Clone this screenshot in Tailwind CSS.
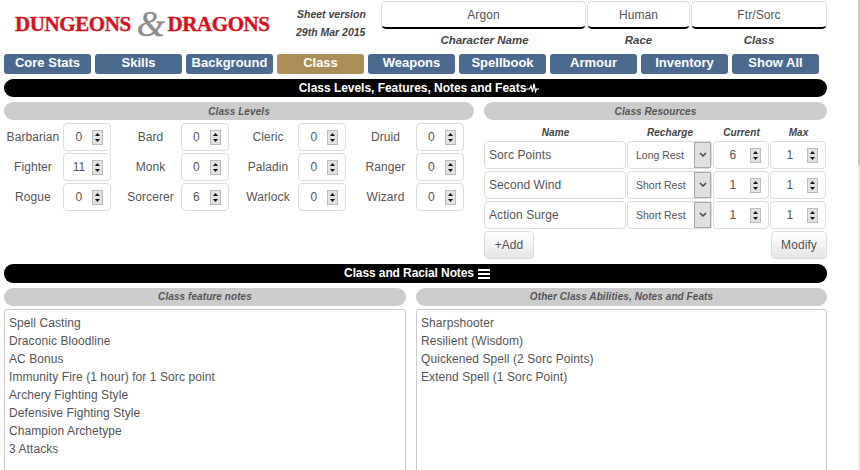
<!DOCTYPE html>
<html lang="en">
<head>
  <meta charset="UTF-8" />
  <title>Character Sheet</title>
  <script src="https://cdn.jsdelivr.net/npm/@tailwindcss/browser@4"></script>
</head>
<body class="bg-white font-['Liberation_Sans',Arial,sans-serif] text-[#555] text-[12px] tracking-[0.08px]">
  <div class="flex w-[860px] h-[470px] overflow-hidden">
  <div class="w-[823px] ml-[4px] shrink-0">

    <!-- Header -->
    <div class="flex h-[54px]">
      <div class="w-[292px] pl-[11px] pt-[10px] flex items-center h-[38px] text-[#d5121e] font-['Liberation_Serif',serif] font-bold text-[21px] leading-none tracking-[-0.4px] [-webkit-text-stroke:0.4px_#d5121e]">
        <span>DUNGEONS</span>
        <span class="text-[#8d8d8d] italic font-normal text-[36px] ml-[6px] mr-[3px] leading-none [-webkit-text-stroke:0.4px_#8d8d8d]">&amp;</span>
        <span>DRAGONS</span>
      </div>
      <div class="w-[85px] text-[10.500px] tracking-normal italic font-bold text-[#444] leading-[18px] pt-[5px]">
        <div class="pl-[1px]">Sheet version</div>
        <div>29th Mar 2015</div>
      </div>
      <div class="flex flex-1 text-center">
        <div class="w-[206px] pr-[1px]">
          <div class="h-[28px] border border-[#ddd] border-b-2 border-b-black rounded-[5px] leading-[26px] mt-[1px]">Argon</div>
          <div class="font-bold italic text-[#444] text-[11.500px] tracking-normal mt-[3px] pl-[2px]">Character Name</div>
        </div>
        <div class="w-[104px] pr-[1px]">
          <div class="h-[28px] border border-[#ddd] border-b-2 border-b-black rounded-[5px] leading-[26px] mt-[1px]">Human</div>
          <div class="font-bold italic text-[#444] text-[11.500px] tracking-normal mt-[3px]">Race</div>
        </div>
        <div class="w-[136px]">
          <div class="h-[28px] border border-[#ddd] border-b-2 border-b-black rounded-[5px] leading-[26px] mt-[1px]">Ftr/Sorc</div>
          <div class="font-bold italic text-[#444] text-[11.500px] tracking-normal mt-[3px]">Class</div>
        </div>
      </div>
    </div>

    <!-- Tabs -->
    <div class="flex gap-[4px] h-[20px] text-white font-bold text-[13px] tracking-normal text-center leading-[17px]">
      <div class="w-[87px] rounded-[3px] bg-[#4a6a8f]">Core Stats</div>
      <div class="w-[87px] rounded-[3px] bg-[#4a6a8f]">Skills</div>
      <div class="w-[87px] rounded-[3px] bg-[#4a6a8f]">Background</div>
      <div class="w-[87px] rounded-[3px] bg-[#ab8d55]">Class</div>
      <div class="w-[87px] rounded-[3px] bg-[#4a6a8f]">Weapons</div>
      <div class="w-[87px] rounded-[3px] bg-[#4a6a8f]">Spellbook</div>
      <div class="w-[87px] rounded-[3px] bg-[#4a6a8f]">Armour</div>
      <div class="w-[87px] rounded-[3px] bg-[#4a6a8f]">Inventory</div>
      <div class="w-[87px] rounded-[3px] bg-[#4a6a8f]">Show All</div>
    </div>

    <div class="mt-[5px] h-[18px] rounded-[9px] bg-black text-white font-bold tracking-[-0.03px] text-center leading-[18px] flex items-center justify-center pl-[8px]">
      Class Levels, Features, Notes and Feats
      <svg width="14" height="12" viewBox="0 0 14 12" fill="none" stroke="white" stroke-width="1.200"><path d="M0 7h3.500l1.500-3 1.500 6 1.500-8.500 1.500 8 1-2.500h2.500" /></svg>
    </div>

    <div class="flex gap-[10px] mt-[5px]">
      <!-- Class levels -->
      <div class="w-[470px]">
        <div class="h-[18px] rounded-[9px] bg-[#ccc] text-center text-[10px] italic font-bold text-[#555] leading-[19px]">Class Levels</div>
        <div id="levels" class="grid grid-cols-4 gap-y-[2px] mt-[3px]"></div>
      </div>

      <!-- Class resources -->
      <div class="w-[343px]">
        <div class="h-[18px] rounded-[9px] bg-[#ccc] text-center text-[10px] italic font-bold text-[#555] leading-[19px]">Class Resources</div>
        <div class="flex text-[10px] italic font-bold text-[#444] text-center h-[21px] items-center pt-[3px]">
          <div class="w-[143px]">Name</div>
          <div class="w-[86px]">Recharge</div>
          <div class="w-[57px]">Current</div>
          <div class="w-[57px]">Max</div>
        </div>
        <div id="resources" class="space-y-[2px]"></div>
        <div class="flex justify-between mt-[2px]">
          <div class="w-[50px] h-[28px] border border-[#ddd] rounded-[4px] bg-gradient-to-b from-white to-[#e6e6e6] text-center leading-[26px]">+Add</div>
          <div class="w-[56px] h-[28px] border border-[#ddd] rounded-[4px] bg-gradient-to-b from-white to-[#e6e6e6] text-center leading-[26px]">Modify</div>
        </div>
      </div>
    </div>

    <div class="mt-[5px] h-[19px] rounded-[9px] bg-black text-white font-bold tracking-[-0.1px] text-center leading-[19px] flex items-center justify-center gap-[4px] pl-[3px]">
      Class and Racial Notes
      <svg width="12" height="10" viewBox="0 0 12 10" fill="white"><rect y="0" width="12" height="2" /><rect y="4" width="12" height="2" /><rect y="8" width="12" height="2" /></svg>
    </div>

    <div class="flex gap-[10px] mt-[5px]">
      <div class="w-[402px]">
        <div class="h-[18px] rounded-[9px] bg-[#ccc] text-center text-[10px] italic font-bold text-[#555] leading-[18px]">Class feature notes</div>
        <div class="mt-[3px] h-[200px] border border-[#ccc] rounded-[3px] px-[4px] pt-[4px] leading-[18px]">
          <div>Spell Casting</div>
          <div>Draconic Bloodline</div>
          <div>AC Bonus</div>
          <div>Immunity Fire (1 hour) for 1 Sorc point</div>
          <div>Archery Fighting Style</div>
          <div>Defensive Fighting Style</div>
          <div>Champion Archetype</div>
          <div>3 Attacks</div>
        </div>
      </div>
      <div class="w-[411px]">
        <div class="h-[18px] rounded-[9px] bg-[#ccc] text-center text-[10px] italic font-bold text-[#555] leading-[18px]">Other Class Abilities, Notes and Feats</div>
        <div class="mt-[3px] h-[200px] border border-[#ccc] rounded-[3px] px-[4px] pt-[4px] leading-[18px]">
          <div>Sharpshooter</div>
          <div>Resilient (Wisdom)</div>
          <div>Quickened Spell (2 Sorc Points)</div>
          <div>Extend Spell (1 Sorc Point)</div>
        </div>
      </div>
    </div>
  </div>

  <!-- Scrollbar sliver at the window edge -->
  <div class="ml-[31px] w-[2px] h-[470px] bg-[#eee] shrink-0">
    <div class="h-[165px] bg-[#ccc]"></div>
  </div>
  </div>

  <script>
    function spinner(value, width) {
      return `<div class="${width} h-[28px] border border-[#ddd] rounded-[4px] flex items-center shrink-0">
        <span class="flex-1 text-center pl-[2px]">${value}</span>
        <span class="w-[11px] h-[15px] mr-[7px] border border-[#bbb] bg-[#e2e2e2] flex flex-col items-center justify-between py-[2px]">
          <svg class="block" width="5" height="3" viewBox="0 0 5 3"><path d="M2.500 0L5 3H0z" fill="#111" /></svg>
          <svg class="block" width="5" height="3" viewBox="0 0 5 3"><path d="M0 0h5L2.500 3z" fill="#111" /></svg>
        </span>
      </div>`;
    }

    const levels = [
      ["Barbarian", 0], ["Bard", 0], ["Cleric", 0], ["Druid", 0],
      ["Fighter", 11], ["Monk", 0], ["Paladin", 0], ["Ranger", 0],
      ["Rogue", 0], ["Sorcerer", 6], ["Warlock", 0], ["Wizard", 0],
    ];
    document.getElementById("levels").innerHTML = levels.map(([name, val]) =>
      `<div class="flex items-center w-[117.300px]">
        <span class="w-[59px] pr-[1px] text-center whitespace-nowrap">${name}</span>
        ${spinner(val, "w-[48px]")}
      </div>`).join("");

    const resources = [
      ["Sorc Points", "Long Rest", 6, 1],
      ["Second Wind", "Short Rest", 1, 1],
      ["Action Surge", "Short Rest", 1, 1],
    ];
    document.getElementById("resources").innerHTML = resources.map(([name, recharge, cur, max]) =>
      `<div class="flex gap-[1px]">
        <div class="w-[142px] h-[28px] border border-[#ddd] rounded-[4px] leading-[26px] px-[4px]">${name}</div>
        <div class="w-[85px] h-[28px] border border-[#ddd] rounded-[4px] flex text-[10.500px] tracking-normal leading-[26px]">
          <span class="flex-1 pl-[8px]">${recharge}</span>
          <span class="w-[17px] h-[26px] bg-[#e0e0e0] border border-[#aaa] flex items-center justify-center">
            <svg width="8" height="6" viewBox="0 0 8 6" fill="none" stroke="#444" stroke-width="1.500"><path d="M1 1l3 3 3-3" /></svg>
          </span>
        </div>
        ${spinner(cur, "w-[56px]")}
        ${spinner(max, "w-[56px]")}
      </div>`).join("");
  </script>
</body>
</html>
